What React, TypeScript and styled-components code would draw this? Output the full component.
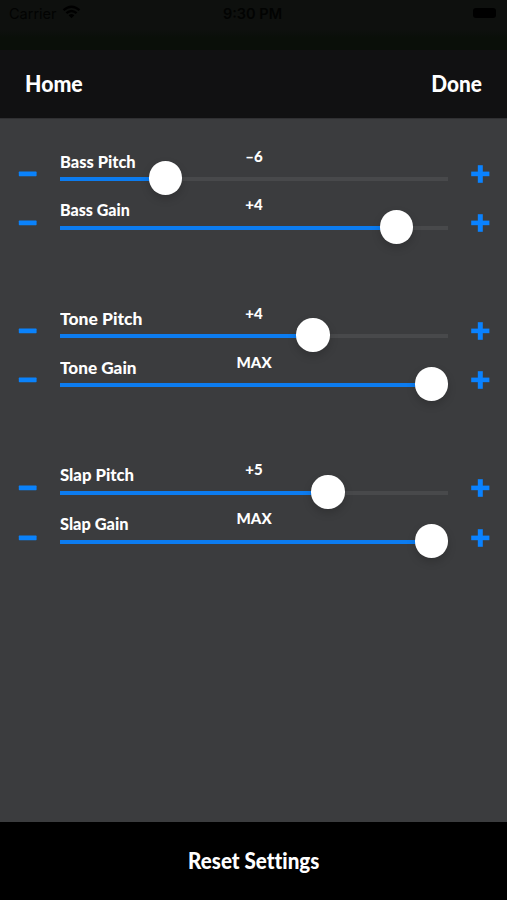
import React from "react";
import styled, { createGlobalStyle } from "styled-components";

const GlobalStyle = createGlobalStyle`
  * { box-sizing: border-box; }
  html, body { margin: 0; padding: 0; background: #3b3c3e; }
  button { border: 0; padding: 0; background: none; color: inherit; font: inherit; cursor: pointer; }
`;

const Screen = styled.div`
  width: 507px;
  height: 900px;
  display: flex;
  flex-direction: column;
  overflow: hidden;
  background: #3b3c3e;
  color: #fff;
  font-family: Lato, "Open Sans", sans-serif;
  font-weight: 900;
  font-variant-ligatures: none;
`;

const StatusBar = styled.div`
  flex: none;
  height: 50px;
  padding: 5px 11px 0 9px;
  display: grid;
  grid-template-columns: 1fr auto 1fr;
  align-items: start;
  background: linear-gradient(#0e100e 0 30px, #0a0f09 38px 100%);
  color: #020302;
  font: 400 14.5px/18px Inter, sans-serif;
`;

const Carrier = styled.div`
  display: flex;
  gap: 5px;
`;

const Clock = styled.div`
  font-weight: 600;
  font-size: 14.5px;
`;

const Battery = styled.div`
  justify-self: end;
  width: 23px;
  height: 10px;
  margin-top: 3px;
  border-radius: 3px;
  background: #000;
`;

const NavBar = styled.header`
  flex: none;
  height: 69px;
  padding: 0 25px 2px 25px;
  display: flex;
  align-items: center;
  justify-content: space-between;
  background: #111112;
  border-bottom: 1px solid #303032;
`;

const Stretch = styled.span<{ $x?: number; $origin?: string }>`
  display: inline-block;
  white-space: pre;
  transform: scaleX(${(p) => p.$x ?? 1});
  transform-origin: ${(p) => p.$origin ?? "left"} center;
`;

const NavButton = styled.button`
  font-size: 23px;
  line-height: 28px;
`;

const Panel = styled.main`
  flex: 1;
  padding-top: 30px;
  display: flex;
  flex-direction: column;
  gap: 59px;
`;

const Group = styled.section`
  display: flex;
  flex-direction: column;
`;

const Row = styled.div`
  height: 49px;
  display: grid;
  grid-template-columns: 60px 388px 59px;
`;

const StepButton = styled.button<{ $side: "left" | "right"; $drop?: number }>`
  width: 20px;
  height: 20px;
  margin: ${(p) => 15 + (p.$drop ?? 0)}px 0 0 ${(p) => (p.$side === "left" ? 18 : 22)}px;
  svg { display: block; }
`;

const Control = styled.div`
  display: flex;
  flex-direction: column;
`;

const Caption = styled.div`
  height: 28px;
  display: grid;
  grid-template-columns: 1fr auto 1fr;
  align-items: start;
`;

const Label = styled.div<{ $raise: number }>`
  padding-top: ${(p) => 2 - p.$raise}px;
  font-size: 17.5px;
  line-height: 22px;
`;

const Value = styled.div<{ $raise: number }>`
  padding-top: ${(p) => 1 - p.$raise}px;
  font-size: 15.5px;
  line-height: 13px;
`;

const Track = styled.div<{ $fill: number }>`
  height: 4px;
  display: flex;
  align-items: center;
  background: linear-gradient(to right, #0c7cf0 ${(p) => p.$fill}px, #48494b ${(p) => p.$fill}px);
`;

const Thumb = styled.div<{ $fill: number }>`
  flex: none;
  width: 33.5px;
  height: 33.5px;
  margin: -2px 0 0 ${(p) => p.$fill - 16.75}px;
  border-radius: 50%;
  background: #fff;
  box-shadow: 0 4px 9px rgba(0, 0, 0, 0.17);
`;

const Footer = styled.footer`
  flex: none;
  height: 78px;
  display: flex;
  align-items: center;
  justify-content: center;
  background: #000;
`;

const ResetButton = styled.button`
  font-size: 22.5px;
  line-height: 28px;
`;

const Minus = () => (
  <svg width="20" height="20" viewBox="0 0 20 20">
    <rect x="0.8" y="7.6" width="17.8" height="4.6" rx="0.6" fill="#0a82fb" />
  </svg>
);

const Plus = () => (
  <svg width="20" height="20" viewBox="0 0 20 20">
    <path d="M10.3 1.2V18.8" stroke="#0a82ff" strokeWidth="5" />
    <path d="M1.2 9.9H19.4" stroke="#0a82ff" strokeWidth="4.6" />
  </svg>
);

const Wifi = () => (
  <svg width="19" height="14" viewBox="0 0 19 14">
    <path d="M1.5 5.2Q9.5 -1.8 17.5 5.2M4.4 8.2Q9.5 3.8 14.6 8.2" fill="none" stroke="#000" strokeWidth="2.4" />
    <path d="M6.6 10.2Q9.5 7.8 12.4 10.2L9.5 13.2Z" fill="#000" />
  </svg>
);

type Setting = { label: string; value: string; fill: number; x: number; raise?: number; drop?: number };

const groups: Setting[][] = [
  [
    { label: "Bass Pitch", value: "–6", fill: 105.3, x: 0.94 },
    { label: "Bass Gain", value: "+4", fill: 336.4, x: 0.917, raise: 1 },
  ],
  [
    { label: "Tone Pitch", value: "+4", fill: 253.2, x: 0.998 },
    { label: "Tone Gain", value: "MAX", fill: 371.7, x: 0.98 },
  ],
  [
    { label: "Slap Pitch", value: "+5", fill: 267.8, x: 0.955, raise: 1 },
    { label: "Slap Gain", value: "MAX", fill: 371.7, x: 0.935, raise: 1, drop: 1 },
  ],
];

export default function App() {
  return (
    <>
      <GlobalStyle />
      <Screen>
        <StatusBar>
          <Carrier>Carrier <Wifi /></Carrier>
          <Clock>9:30 PM</Clock>
          <Battery />
        </StatusBar>
        <NavBar>
          <NavButton><Stretch $x={0.925}>Home</Stretch></NavButton>
          <NavButton><Stretch $x={0.905} $origin="right">Done</Stretch></NavButton>
        </NavBar>
        <Panel>
          {groups.map((settings, i) => (
            <Group key={i}>
              {settings.map((s) => (
                <Row key={s.label}>
                  <StepButton $side="left" $drop={s.drop} aria-label={"Decrease " + s.label}><Minus /></StepButton>
                  <Control>
                    <Caption>
                      <Label $raise={s.raise ?? 0}><Stretch $x={s.x}>{s.label}</Stretch></Label>
                      <Value $raise={s.raise ?? 0}><Stretch $origin="center" $x={0.97}>{s.value}</Stretch></Value>
                    </Caption>
                    <Track $fill={s.fill}><Thumb $fill={s.fill} /></Track>
                  </Control>
                  <StepButton $side="right" $drop={s.drop} aria-label={"Increase " + s.label}><Plus /></StepButton>
                </Row>
              ))}
            </Group>
          ))}
        </Panel>
        <Footer>
          <ResetButton><Stretch $origin="center" $x={0.915}>Reset Settings</Stretch></ResetButton>
        </Footer>
      </Screen>
    </>
  );
}
